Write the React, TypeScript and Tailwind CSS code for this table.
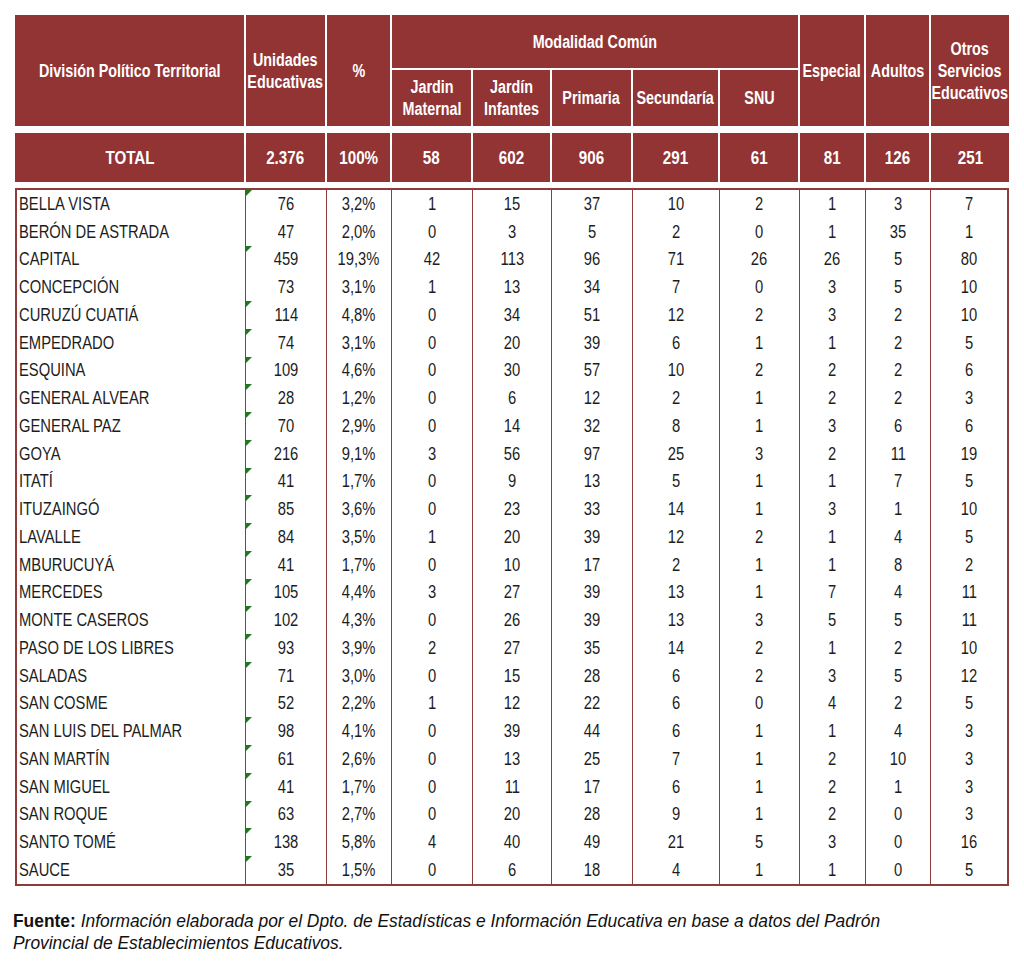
import type { ReactNode } from "react";

const rows: string[][] = [
  ["BELLA VISTA", "76", "3,2%", "1", "15", "37", "10", "2", "1", "3", "7"],
  ["BERÓN DE ASTRADA", "47", "2,0%", "0", "3", "5", "2", "0", "1", "35", "1"],
  ["CAPITAL", "459", "19,3%", "42", "113", "96", "71", "26", "26", "5", "80"],
  ["CONCEPCIÓN", "73", "3,1%", "1", "13", "34", "7", "0", "3", "5", "10"],
  ["CURUZÚ CUATIÁ", "114", "4,8%", "0", "34", "51", "12", "2", "3", "2", "10"],
  ["EMPEDRADO", "74", "3,1%", "0", "20", "39", "6", "1", "1", "2", "5"],
  ["ESQUINA", "109", "4,6%", "0", "30", "57", "10", "2", "2", "2", "6"],
  ["GENERAL ALVEAR", "28", "1,2%", "0", "6", "12", "2", "1", "2", "2", "3"],
  ["GENERAL PAZ", "70", "2,9%", "0", "14", "32", "8", "1", "3", "6", "6"],
  ["GOYA", "216", "9,1%", "3", "56", "97", "25", "3", "2", "11", "19"],
  ["ITATÍ", "41", "1,7%", "0", "9", "13", "5", "1", "1", "7", "5"],
  ["ITUZAINGÓ", "85", "3,6%", "0", "23", "33", "14", "1", "3", "1", "10"],
  ["LAVALLE", "84", "3,5%", "1", "20", "39", "12", "2", "1", "4", "5"],
  ["MBURUCUYÁ", "41", "1,7%", "0", "10", "17", "2", "1", "1", "8", "2"],
  ["MERCEDES", "105", "4,4%", "3", "27", "39", "13", "1", "7", "4", "11"],
  ["MONTE CASEROS", "102", "4,3%", "0", "26", "39", "13", "3", "5", "5", "11"],
  ["PASO DE LOS LIBRES", "93", "3,9%", "2", "27", "35", "14", "2", "1", "2", "10"],
  ["SALADAS", "71", "3,0%", "0", "15", "28", "6", "2", "3", "5", "12"],
  ["SAN COSME", "52", "2,2%", "1", "12", "22", "6", "0", "4", "2", "5"],
  ["SAN LUIS DEL PALMAR", "98", "4,1%", "0", "39", "44", "6", "1", "1", "4", "3"],
  ["SAN MARTÍN", "61", "2,6%", "0", "13", "25", "7", "1", "2", "10", "3"],
  ["SAN MIGUEL", "41", "1,7%", "0", "11", "17", "6", "1", "2", "1", "3"],
  ["SAN ROQUE", "63", "2,7%", "0", "20", "28", "9", "1", "2", "0", "3"],
  ["SANTO TOMÉ", "138", "5,8%", "4", "40", "49", "21", "5", "3", "0", "16"],
  ["SAUCE", "35", "1,5%", "0", "6", "18", "4", "1", "1", "0", "5"],
];

// rows without the little green excel marker
const noMarker = ["BERÓN DE ASTRADA", "CONCEPCIÓN", "SAN COSME"];

const totals = ["TOTAL", "2.376", "100%", "58", "602", "906", "291", "61", "81", "126", "251"];

const headCols =
  "grid grid-cols-[229px_79px_63px_79px_77px_79px_85px_78px_64px_63px_78px] gap-[2px]";
const bodyCols =
  "grid grid-cols-[229px_81px_65px_81px_79px_81px_87px_80px_66px_65px_76px]";

const hcell = "bg-[#923434] text-white font-bold flex items-center justify-center text-center";

// no narrow face installed, so squeeze Liberation Sans like Arial Narrow
function Narrow({ children, left }: { children: ReactNode; left?: boolean }) {
  return (
    <span
      className={`inline-block whitespace-nowrap scale-x-[0.82] ${left ? "origin-left" : "origin-center"}`}
    >
      {children}
    </span>
  );
}

export default function App() {
  return (
    <div className="w-[1024px] h-[977px] bg-white pt-[15px] font-[family-name:Liberation_Sans,Arial,sans-serif] text-[#1d1d1d]">
      <div className="ml-[15px] w-[994px]">
        {/* Header */}
        <div className={`${headCols} grid-rows-[53px_56px] text-[17.5px] leading-[22px]`}>
          <div className={`${hcell} row-span-2`}>
            <Narrow>División Político Territorial</Narrow>
          </div>
          <div className={`${hcell} row-span-2`}>
            <Narrow>
              Unidades
              <br />
              Educativas
            </Narrow>
          </div>
          <div className={`${hcell} row-span-2`}>
            <Narrow>%</Narrow>
          </div>
          <div className={`${hcell} col-span-5`}>
            <Narrow>Modalidad Común</Narrow>
          </div>
          <div className={`${hcell} row-span-2`}>
            <Narrow>Especial</Narrow>
          </div>
          <div className={`${hcell} row-span-2`}>
            <Narrow>Adultos</Narrow>
          </div>
          <div className={`${hcell} row-span-2`}>
            <Narrow>
              Otros
              <br />
              Servicios
              <br />
              Educativos
            </Narrow>
          </div>
          <div className={hcell}>
            <Narrow>
              Jardin
              <br />
              Maternal
            </Narrow>
          </div>
          <div className={hcell}>
            <Narrow>
              Jardín
              <br />
              Infantes
            </Narrow>
          </div>
          <div className={hcell}>
            <Narrow>Primaria</Narrow>
          </div>
          <div className={hcell}>
            <Narrow>Secundaría</Narrow>
          </div>
          <div className={hcell}>
            <Narrow>SNU</Narrow>
          </div>
        </div>

        {/* Total */}
        <div className={`${headCols} mt-[7px] h-[49px] text-[18.5px]`}>
          {totals.map((t, i) => (
            <div key={i} className={hcell}>
              <Narrow>{t}</Narrow>
            </div>
          ))}
        </div>

        {/* Body */}
        <div className="mt-[6px] border-2 border-[#8e3b3b] text-[18px]">
          {rows.map((r) => (
            <div key={r[0]} className={`${bodyCols} h-[27.75px]`}>
              {r.map((v, i) => (
                <div
                  key={i}
                  className={
                    i === 0
                      ? "flex items-center pl-[2px] border-r-[1.5px] border-[#8e3b3b] leading-none"
                      : i === 10
                        ? "flex items-center justify-center leading-none"
                        : "relative flex items-center justify-center border-r-[1.5px] border-[#8e3b3b] leading-none"
                  }
                >
                  {i === 1 && !noMarker.includes(r[0]) && (
                    <svg className="absolute left-0 top-0" width="6" height="6" viewBox="0 0 6 6">
                      <path d="M0 0H6L0 6Z" fill="#1f7a1f" />
                    </svg>
                  )}
                  <Narrow left={i === 0}>{v}</Narrow>
                </div>
              ))}
            </div>
          ))}
        </div>
      </div>

      {/* Source */}
      <p className="mt-[24px] ml-[13px] w-[1100px] origin-left scale-x-[0.94] text-[18.5px] leading-[22px] text-[#111]">
        <span className="font-bold">Fuente:</span>{" "}
        <span className="italic">
          Información elaborada por el Dpto. de Estadísticas e Información Educativa en base a datos del Padrón
          <br />
          Provincial de Establecimientos Educativos.
        </span>
      </p>
    </div>
  );
}
